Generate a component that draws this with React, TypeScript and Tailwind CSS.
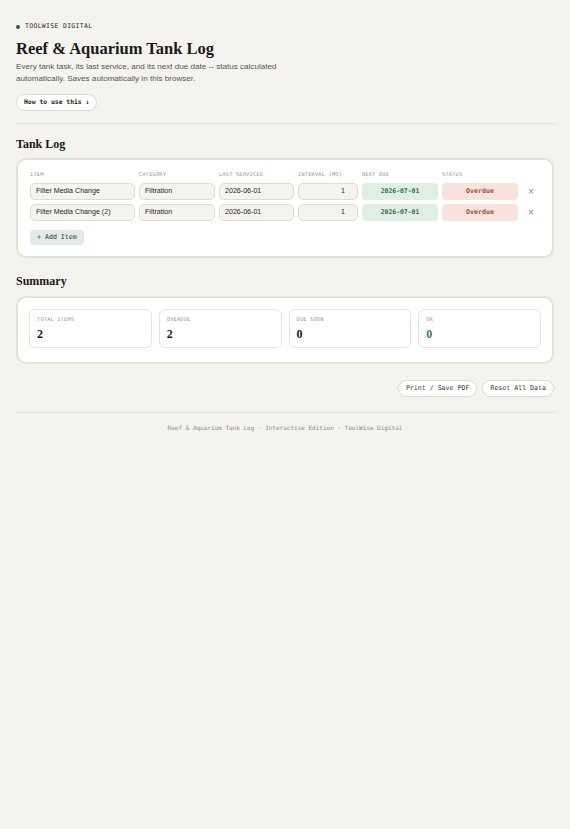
import { useState } from "react";

const MONO = "font-['DejaVu_Sans_Mono','Liberation_Mono',monospace]";
const SERIF = "font-['Liberation_Serif','Times_New_Roman',serif]";
const SANS = "font-['Liberation_Sans',Arial,sans-serif]";

interface Row {
  item: string;
  category: string;
  last: string;
  interval: number;
  next: string;
  status: string;
}

const initialRows: Row[] = [
  { item: "Filter Media Change", category: "Filtration", last: "2026-06-01", interval: 1, next: "2026-07-01", status: "Overdue" },
  { item: "Filter Media Change (2)", category: "Filtration", last: "2026-06-01", interval: 1, next: "2026-07-01", status: "Overdue" },
];

const inputCls = `h-[17px] rounded-[5px] border border-[#dedbcf] bg-[#f4f3ee] px-[5px] text-[7.1px] text-[#1f1f1f] ${SANS}`;

export default function App() {
  const [rows] = useState<Row[]>(initialRows);

  const stats = [
    { label: "TOTAL ITEMS", value: rows.length, color: "text-[#1c1c1c]" },
    { label: "OVERDUE", value: rows.filter((r) => r.status === "Overdue").length, color: "text-[#1c1c1c]" },
    { label: "DUE SOON", value: 0, color: "text-[#1c1c1c]" },
    { label: "OK", value: 0, color: "text-[#3d7a5a]" },
  ];

  return (
    <div className="min-h-[829px] bg-[#f4f3ee] text-[#1c1c1c]">
      <div className="px-4 pt-[22px]">
        {/* Header */}
        <div className={`flex items-center gap-[5px] text-[6.5px] tracking-[0.3px] text-[#2a2a2a] ${MONO}`}>
          <span className="h-[4px] w-[4px] rounded-full bg-[#2f5a44]" />
          TOOLWISE DIGITAL
        </div>
        <h1 className={`mt-[7px] text-[16.5px] font-bold leading-[20px] text-[#1a1a1a] ${SERIF}`}>
          Reef &amp; Aquarium Tank Log
        </h1>
        <p className={`mt-[2px] max-w-[285px] text-[8.1px] leading-[12.5px] text-[#555] ${SANS}`}>
          Every tank task, its last service, and its next due date -- status calculated automatically. Saves automatically in this browser.
        </p>
        <button
          className={`mt-[6px] h-[17px] rounded-full border border-[#dcd9ce] bg-white px-[7px] text-[6.4px] font-bold text-[#222] ${MONO}`}
        >
          How to use this ↓
        </button>
        <div className="mt-[12px] h-px bg-[#e3e0d7]" />

        {/* Tank Log */}
        <h2 className={`mt-[12px] text-[12px] font-bold leading-[16px] text-[#1a1a1a] ${SERIF}`}>Tank Log</h2>
        <div className="mt-[6px] rounded-[10px] border-2 border-[#e4e1d6] bg-white px-[12px] pt-[11px] pb-[11px]">
          <div className={`grid grid-cols-[105px_76px_75px_60px_76px_76px_1fr] gap-x-[4px] text-[5.3px] uppercase tracking-[0.2px] text-[#9a978e] ${MONO}`}>
            <span>Item</span>
            <span>Category</span>
            <span>Last Serviced</span>
            <span>Interval (Mo)</span>
            <span>Next Due</span>
            <span>Status</span>
            <span />
          </div>
          <div className="mt-[4px] flex flex-col gap-[4px]">
            {rows.map((r) => (
              <div key={r.item} className="grid grid-cols-[105px_76px_75px_60px_76px_76px_1fr] items-center gap-x-[4px]">
                <div className={`${inputCls} flex items-center`}>{r.item}</div>
                <div className={`${inputCls} flex items-center`}>{r.category}</div>
                <div className={`${inputCls} flex items-center`}>{r.last}</div>
                <div className={`${inputCls} flex items-center justify-end pr-[12px]`}>{r.interval}</div>
                <div className={`flex h-[17px] items-center justify-center rounded-[4px] bg-[#e0efe4] text-[6.4px] font-bold text-[#2f6b47] ${MONO}`}>
                  {r.next}
                </div>
                <div className={`flex h-[17px] items-center justify-center rounded-[4px] bg-[#f7e2dc] text-[6.6px] font-bold text-[#a64a3e] ${MONO}`}>
                  {r.status}
                </div>
                <div className={`flex items-center justify-center text-[10px] font-light text-[#8a8780] ${SANS}`}>×</div>
              </div>
            ))}
          </div>
          <button
            className={`mt-[9px] h-[15px] rounded-[4px] bg-[#e3ebe6] px-[7px] text-[6.6px] text-[#2d2d2d] ${MONO}`}
          >
            + Add Item
          </button>
        </div>

        {/* Summary */}
        <h2 className={`mt-[15px] text-[12px] font-bold leading-[16px] text-[#1a1a1a] ${SERIF}`}>Summary</h2>
        <div className="mt-[7px] rounded-[10px] border-2 border-[#e4e1d6] bg-white px-[11px] pt-[11px] pb-[14px]">
          <div className="grid grid-cols-4 gap-[7px]">
            {stats.map((s) => (
              <div key={s.label} className="h-[39px] rounded-[6px] border border-[#e8e5dc] bg-white px-[7px] pt-[6px]">
                <div className={`text-[5.3px] tracking-[0.2px] text-[#9a978e] ${MONO}`}>{s.label}</div>
                <div className={`mt-[3px] text-[12px] font-bold leading-[14px] ${s.color} ${SERIF}`}>{s.value}</div>
              </div>
            ))}
          </div>
        </div>

        {/* Actions */}
        <div className="mt-[16px] flex justify-end gap-[5px]">
          <button className={`h-[17px] rounded-full border border-[#dcd9ce] bg-white px-[7px] text-[6.6px] text-[#333] ${MONO}`}>
            Print / Save PDF
          </button>
          <button className={`h-[17px] rounded-full border border-[#dcd9ce] bg-white px-[7px] text-[6.6px] text-[#333] ${MONO}`}>
            Reset All Data
          </button>
        </div>

        <div className="mt-[15px] h-px bg-[#e3e0d7]" />
        <p className={`mt-[10px] text-center text-[6px] text-[#8f8c84] ${MONO}`}>
          Reef &amp; Aquarium Tank Log · Interactive Edition · ToolWise Digital
        </p>
      </div>
    </div>
  );
}
